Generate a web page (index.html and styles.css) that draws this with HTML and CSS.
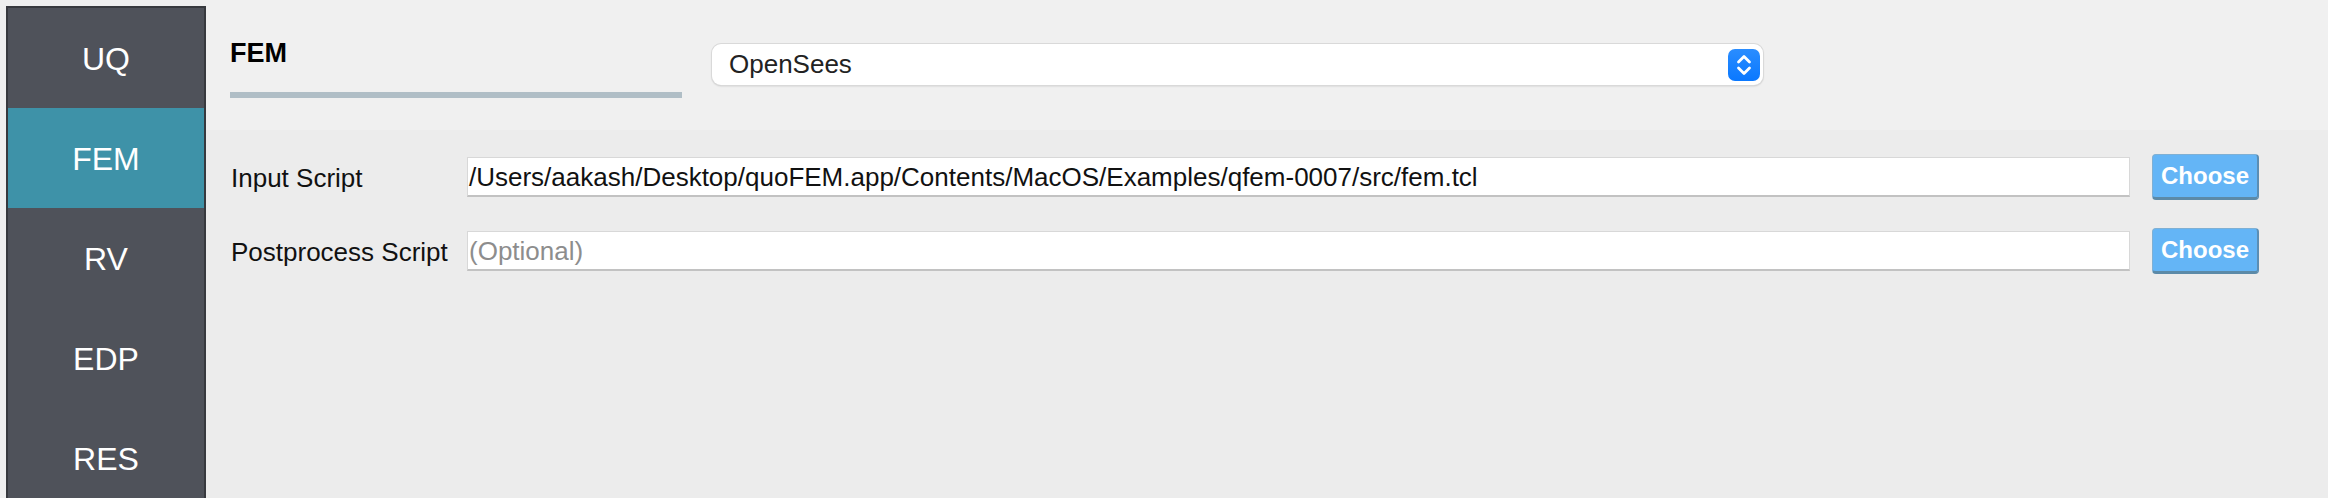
FILE: index.html
```html
<!DOCTYPE html>
<html>
<head>
<meta charset="utf-8">
<link rel="stylesheet" href="styles.css">
</head>
<body>
<nav class="sidebar">
  <div class="nav-item">UQ</div>
  <div class="nav-item active">FEM</div>
  <div class="nav-item">RV</div>
  <div class="nav-item">EDP</div>
  <div class="nav-item">RES</div>
</nav>
<main class="main">
  <header class="header">
    <div class="title-block">
      <div class="title">FEM</div>
      <div class="title-bar"></div>
    </div>
    <div class="combo">
      <span class="combo-text">OpenSees</span>
      <span class="stepper">
        <svg width="32" height="32" viewBox="0 0 32 32">
          <path d="M10.5 13 L16 7.5 L21.5 13" fill="none" stroke="#fff" stroke-width="2.8" stroke-linecap="round" stroke-linejoin="round"/>
          <path d="M10.5 19 L16 24.5 L21.5 19" fill="none" stroke="#fff" stroke-width="2.8" stroke-linecap="round" stroke-linejoin="round"/>
        </svg>
      </span>
    </div>
  </header>
  <section class="content">
    <div class="row">
      <label class="label">Input Script</label>
      <div class="field">/Users/aakash/Desktop/quoFEM.app/Contents/MacOS/Examples/qfem-0007/src/fem.tcl</div>
      <button class="choose">Choose</button>
    </div>
    <div class="row">
      <label class="label">Postprocess Script</label>
      <div class="field placeholder">(Optional)</div>
      <button class="choose">Choose</button>
    </div>
  </section>
</main>
</body>
</html>
```
FILE: styles.css
```css
html, body {
  margin: 0;
  padding: 0;
}
body {
  display: flex;
  height: 498px;
  overflow: hidden;
  background: #efefef;
  font-family: "Liberation Sans", Arial, sans-serif;
  color: #111;
}
.sidebar {
  margin: 6px 0 0 6px;
  width: 196px;
  flex: none;
  align-self: flex-start;
  background: #4f525a;
  border: 2px solid #37393e;
  border-bottom: none;
  display: flex;
  flex-direction: column;
}
.nav-item {
  height: 100px;
  box-sizing: border-box;
  padding-top: 3px;
  display: flex;
  align-items: center;
  justify-content: center;
  color: #ffffff;
  font-size: 32px;
}
.nav-item.active {
  background: #3e92a8;
}
.main {
  flex: 1;
  display: flex;
  flex-direction: column;
}
.header {
  height: 130px;
  flex: none;
  background: #f0f0f0;
  display: flex;
  align-items: flex-start;
  padding-left: 24px;
}
.title-block {
  width: 452px;
  padding-top: 38px;
}
.title {
  font-size: 27px;
  font-weight: bold;
  line-height: 31px;
  color: #000;
}
.title-bar {
  margin-top: 23px;
  height: 6px;
  background: #b0bec6;
}
.combo {
  margin-top: 44px;
  margin-left: 30px;
  width: 1051px;
  height: 41px;
  box-sizing: border-box;
  background: #fff;
  border-radius: 9px;
  box-shadow: 0 0 0 1px #d9d9d9, 0 1px 2px rgba(0,0,0,0.22);
  display: flex;
  align-items: center;
  justify-content: space-between;
  padding: 0 3px 0 17px;
}
.combo-text {
  font-size: 26px;
  color: #222;
}
.stepper {
  width: 32px;
  height: 32px;
  border-radius: 7px;
  background: linear-gradient(#2a8dff, #0a78ff);
  display: flex;
}
.content {
  flex: 1;
  background: #ececec;
  padding-top: 24px;
  display: flex;
  flex-direction: column;
  gap: 28px;
}
.row {
  display: flex;
  align-items: center;
  height: 46px;
  padding-left: 25px;
}
.label {
  width: 236px;
  flex: none;
  font-size: 26px;
  padding-top: 2px;
  color: #111;
}
.field {
  width: 1663px;
  height: 40px;
  box-sizing: border-box;
  background: #fff;
  border: 1px solid #d8d8d8;
  border-bottom: 2px solid #c2c2c2;
  padding-left: 1px;
  font-size: 26px;
  line-height: 38px;
  color: #111;
  white-space: nowrap;
  overflow: hidden;
}
.field.placeholder {
  color: #8d8d8d;
}
.choose {
  margin-left: 22px;
  width: 107px;
  height: 46px;
  box-sizing: border-box;
  background: #64b5f6;
  border: 1px solid #7fb0d4;
  border-right: 2px solid #5c8eb3;
  border-bottom: 3px solid #5c8aa8;
  border-radius: 4px;
  color: #fff;
  font-family: "Liberation Sans", Arial, sans-serif;
  font-weight: bold;
  font-size: 24px;
  padding: 0;
}
```
